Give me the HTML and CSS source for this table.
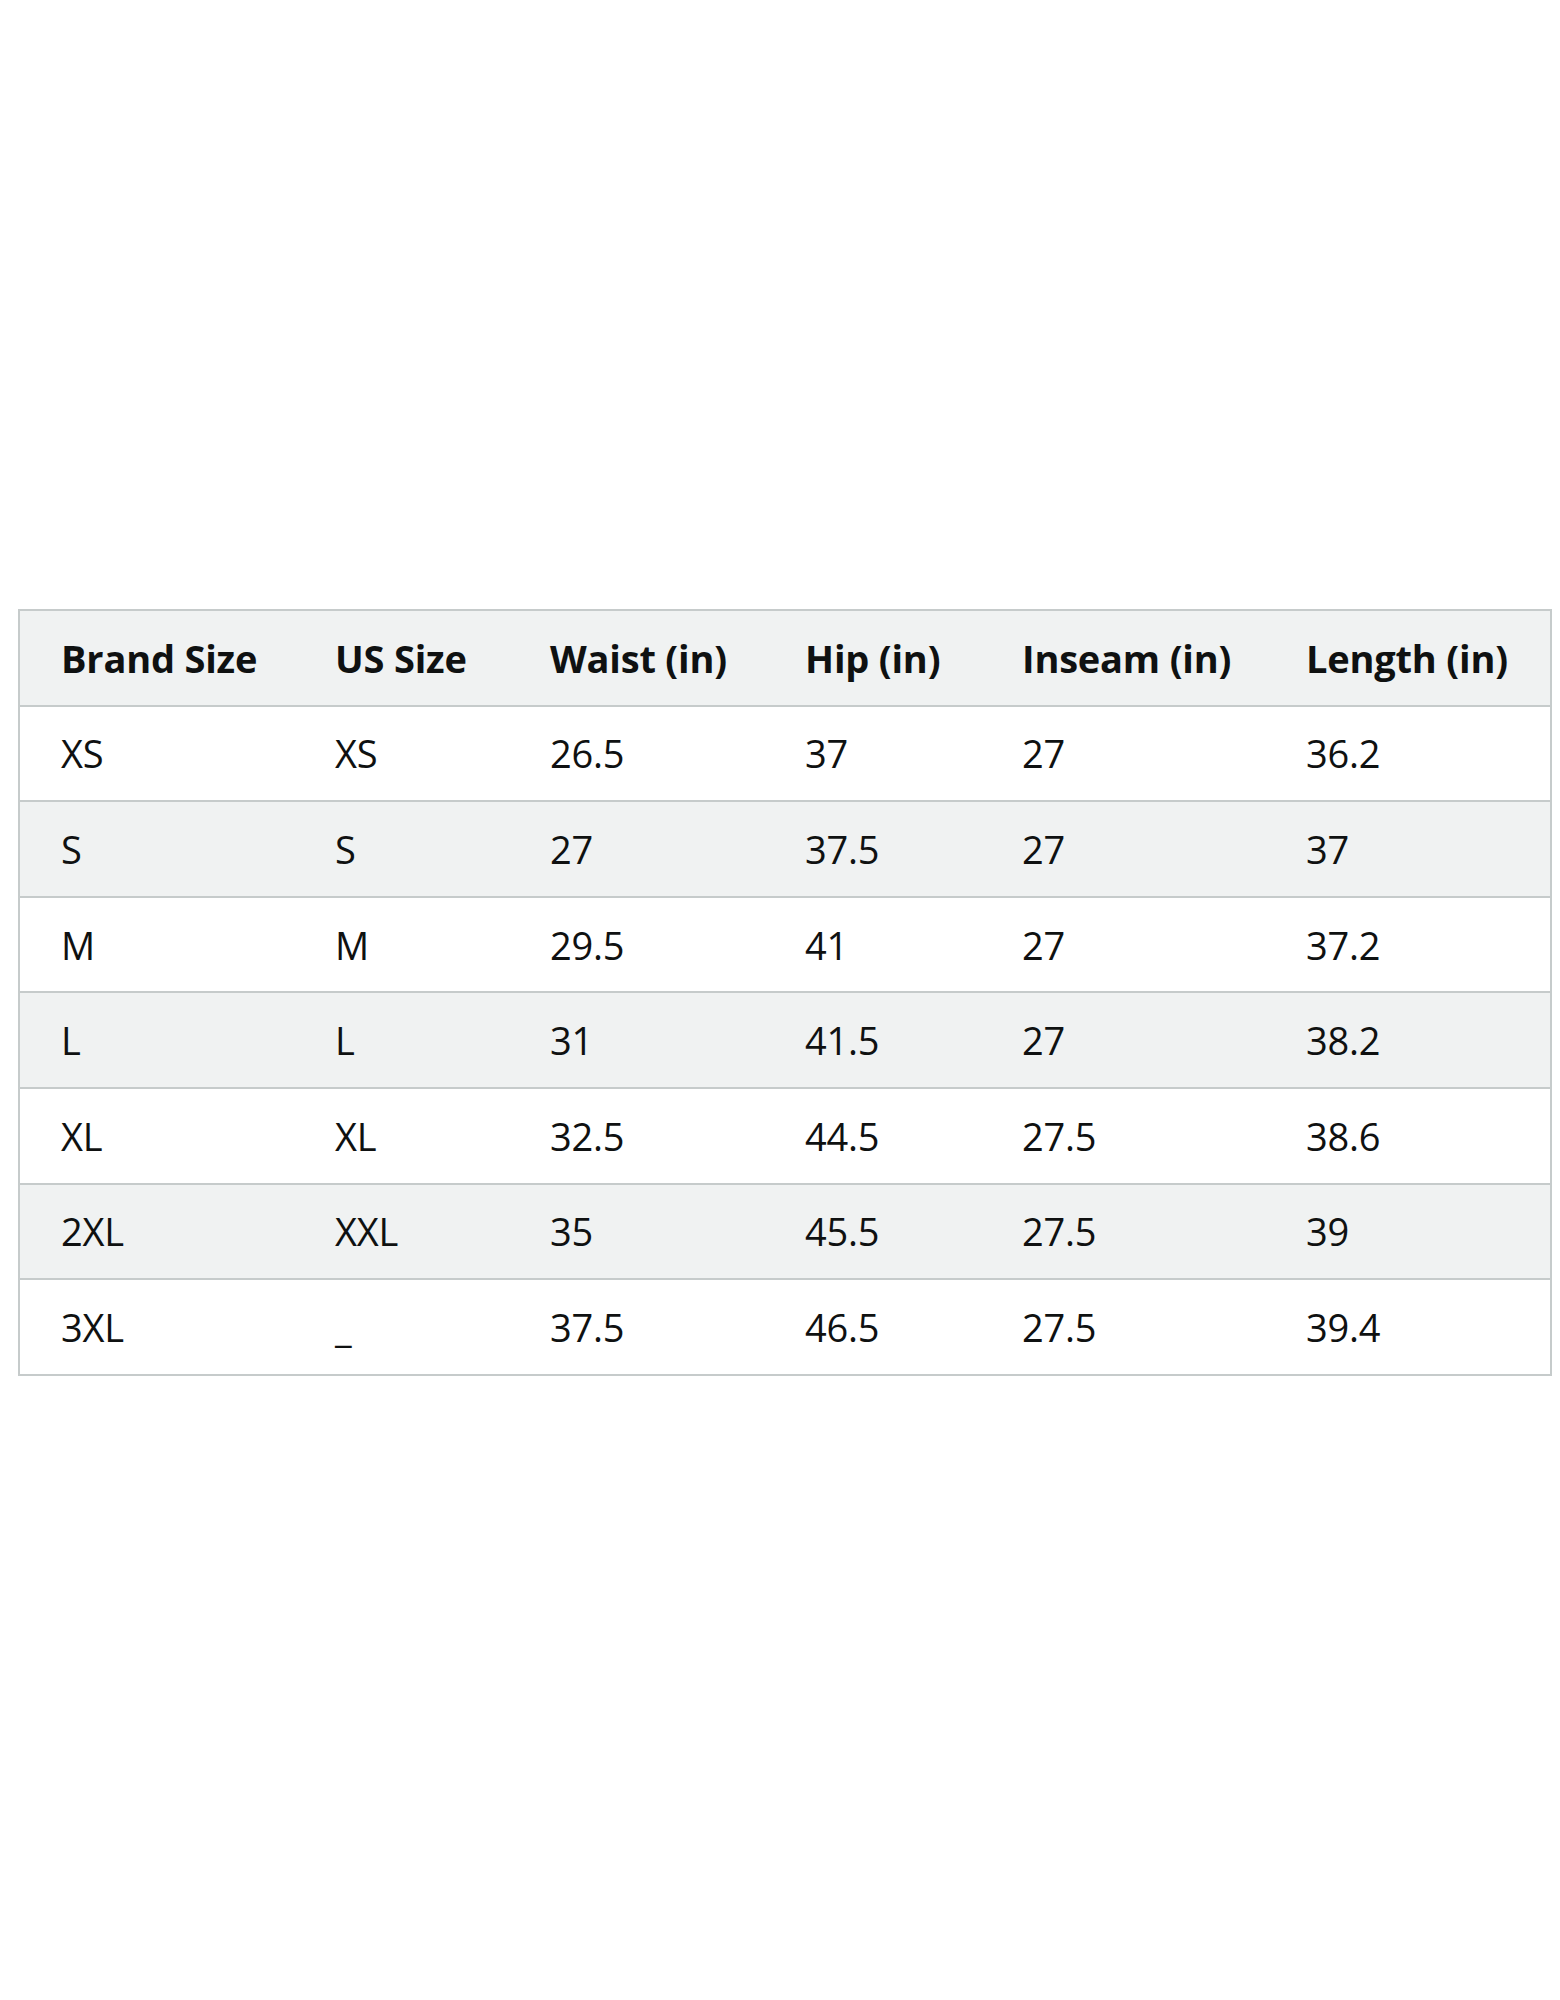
FILE: index.html
```html
<!DOCTYPE html>
<html>
<head>
<meta charset="utf-8">
<link rel="stylesheet" href="styles.css">
</head>
<body>
<div class="page">
<table class="chart">
<colgroup>
<col class="c1"><col class="c2"><col class="c3"><col class="c4"><col class="c5"><col class="c6">
</colgroup>
<thead>
<tr><th>Brand Size</th><th>US Size</th><th>Waist (in)</th><th>Hip (in)</th><th>Inseam (in)</th><th>Length (in)</th></tr>
</thead>
<tbody>
<tr><td>XS</td><td>XS</td><td>26.5</td><td>37</td><td>27</td><td>36.2</td></tr>
<tr><td>S</td><td>S</td><td>27</td><td>37.5</td><td>27</td><td>37</td></tr>
<tr><td>M</td><td>M</td><td>29.5</td><td>41</td><td>27</td><td>37.2</td></tr>
<tr><td>L</td><td>L</td><td>31</td><td>41.5</td><td>27</td><td>38.2</td></tr>
<tr><td>XL</td><td>XL</td><td>32.5</td><td>44.5</td><td>27.5</td><td>38.6</td></tr>
<tr><td>2XL</td><td>XXL</td><td>35</td><td>45.5</td><td>27.5</td><td>39</td></tr>
<tr><td>3XL</td><td>_</td><td>37.5</td><td>46.5</td><td>27.5</td><td>39.4</td></tr>
</tbody>
</table>
</div>
</body>
</html>
```
FILE: styles.css
```css
html, body {
  margin: 0;
  padding: 0;
  background: #ffffff;
}
.page {
  padding: 609px 10px 0 18px;
}
.chart {
  border-collapse: collapse;
  width: 1532px;
  table-layout: fixed;
  font-family: "Open Sans", "Noto Sans", sans-serif;
  font-size: 38px;
  color: #0f1111;
  border: 2px solid #c6cbcb;
}
.c1 { width: 275px; }
.c2 { width: 215px; }
.c3 { width: 255px; }
.c4 { width: 217px; }
.c5 { width: 284px; }
.c6 { width: 286px; }
.chart th, .chart td {
  border-top: 2px solid #c6cbcb;
  border-bottom: 2px solid #c6cbcb;
  height: 93.6px;
  padding: 0 0 0 41px;
  text-align: left;
  vertical-align: middle;
  white-space: nowrap;
  letter-spacing: -0.2px;
}
.chart th {
  font-weight: 700;
  background: #f0f2f2;
}
.chart td {
  font-weight: 400;
}
.chart tbody tr:nth-child(even) td {
  background: #f0f2f2;
}
```
